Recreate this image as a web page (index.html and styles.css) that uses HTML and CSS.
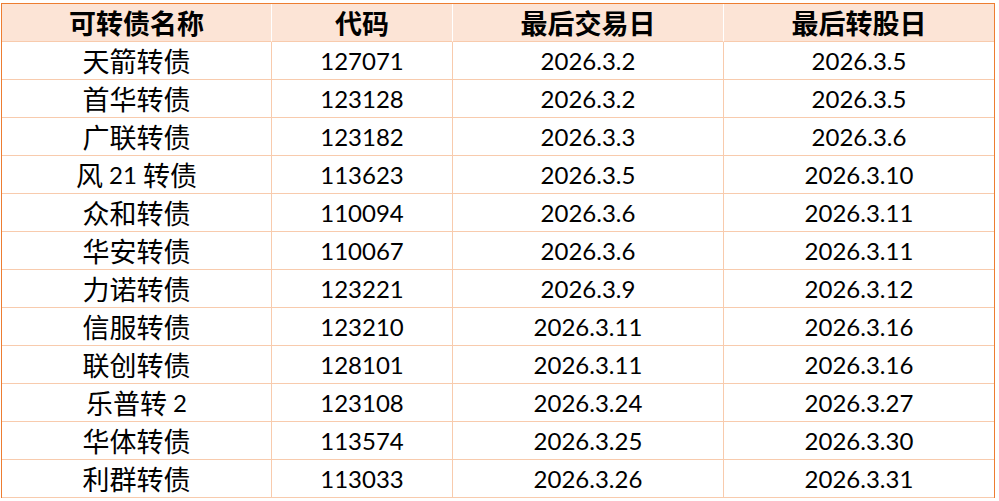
FILE: index.html
```html
<!DOCTYPE html>
<html lang="zh">
<head>
<meta charset="utf-8">
<link rel="stylesheet" href="styles.css">
</head>
<body>
<div class="sheet">
  <div class="cell head c1"><span class="zh">可转债名称</span></div>
  <div class="cell head"><span class="zh">代码</span></div>
  <div class="cell head"><span class="zh">最后交易日</span></div>
  <div class="cell head last"><span class="zh">最后转股日</span></div>

  <div class="cell"><span class="zh">天箭转债</span></div><div class="cell">127071</div><div class="cell">2026.3.2</div><div class="cell last">2026.3.5</div>
  <div class="cell"><span class="zh">首华转债</span></div><div class="cell">123128</div><div class="cell">2026.3.2</div><div class="cell last">2026.3.5</div>
  <div class="cell"><span class="zh">广联转债</span></div><div class="cell">123182</div><div class="cell">2026.3.3</div><div class="cell last">2026.3.6</div>
  <div class="cell"><span class="zh">风</span>&nbsp;21&nbsp;<span class="zh">转债</span></div><div class="cell">113623</div><div class="cell">2026.3.5</div><div class="cell last">2026.3.10</div>
  <div class="cell"><span class="zh">众和转债</span></div><div class="cell">110094</div><div class="cell">2026.3.6</div><div class="cell last">2026.3.11</div>
  <div class="cell"><span class="zh">华安转债</span></div><div class="cell">110067</div><div class="cell">2026.3.6</div><div class="cell last">2026.3.11</div>
  <div class="cell"><span class="zh">力诺转债</span></div><div class="cell">123221</div><div class="cell">2026.3.9</div><div class="cell last">2026.3.12</div>
  <div class="cell"><span class="zh">信服转债</span></div><div class="cell">123210</div><div class="cell">2026.3.11</div><div class="cell last">2026.3.16</div>
  <div class="cell"><span class="zh">联创转债</span></div><div class="cell">128101</div><div class="cell">2026.3.11</div><div class="cell last">2026.3.16</div>
  <div class="cell"><span class="zh">乐普转</span>&nbsp;2</div><div class="cell">123108</div><div class="cell">2026.3.24</div><div class="cell last">2026.3.27</div>
  <div class="cell"><span class="zh">华体转债</span></div><div class="cell">113574</div><div class="cell">2026.3.25</div><div class="cell last">2026.3.30</div>
  <div class="cell"><span class="zh">利群转债</span></div><div class="cell">113033</div><div class="cell">2026.3.26</div><div class="cell last">2026.3.31</div>
</div>
</body>
</html>
```

FILE: styles.css
```css
html, body {
  margin: 0;
  padding: 0;
  background: #ffffff;
}

body {
  font-family: "Lato", "Noto Sans CJK SC", sans-serif;
  color: #000000;
  overflow: hidden;
}

.sheet {
  margin: 3px 0 0 1px;
  width: 992px;
  display: grid;
  grid-template-columns: 270px 181px 271px 270px;
  grid-auto-rows: 38px;
  border-top: 1px solid #ed7d31;
  border-left: 1px solid #ed7d31;
  border-right: 1px solid #ed7d31;
}

.cell {
  box-sizing: border-box;
  display: flex;
  align-items: center;
  justify-content: center;
  border-right: 1px solid #f8cbad;
  border-bottom: 1px solid #f8cbad;
  font-size: 24px;
  white-space: pre;
  line-height: 1;
}

.cell.last {
  border-right: none;
}

.head {
  background: #fce4d6;
  border-right-color: #ffffff;
  border-bottom-color: #f8cbad;
  font-weight: bold;
}

.zh {
  font-family: "Noto Sans CJK SC", sans-serif;
  font-size: 27px;
}

.head .zh {
  font-size: 27px;
  font-weight: bold;
}
```
